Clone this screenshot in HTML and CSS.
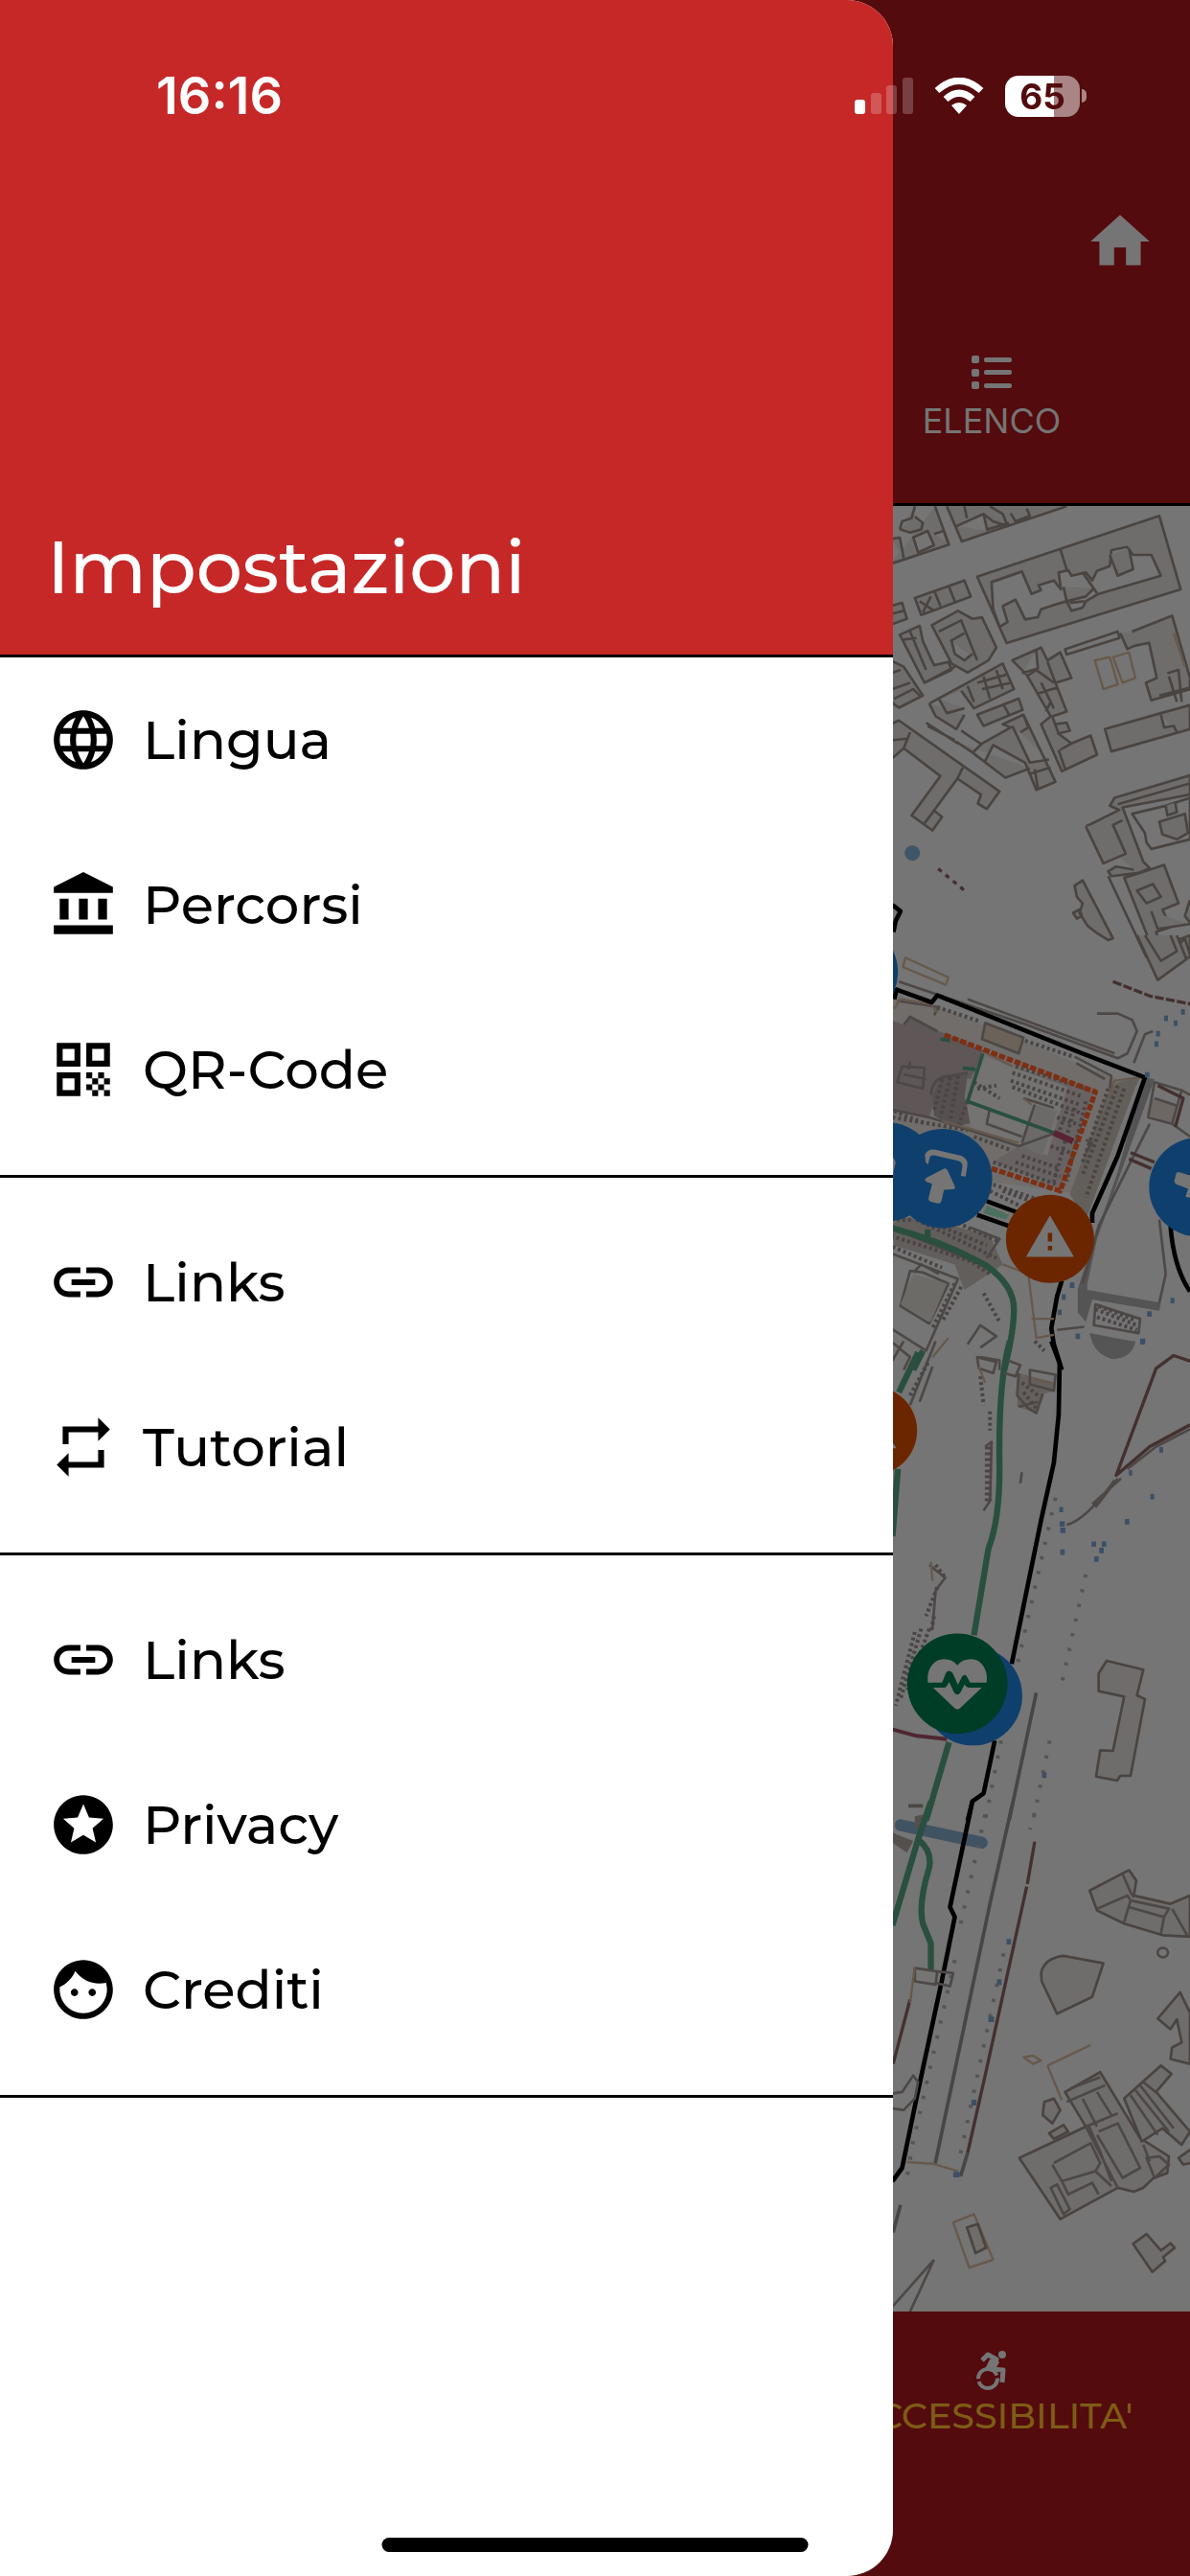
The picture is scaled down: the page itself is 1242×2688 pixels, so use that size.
FILE: index.html
```
<!DOCTYPE html>
<html lang="it">
  <head>
    <meta charset="UTF-8" />
    <meta name="viewport" content="width=device-width, initial-scale=1" />
    <title>Impostazioni</title>
    <link rel="stylesheet" href="styles.css">
  </head>
  <body>

    <!-- page under the drawer -->
    <div class="app">
      <header class="app-header">
        <a href="#home" class="home-link" aria-label="Home">
          <svg class="icon" viewBox="0 0 24 24"><path d="M10 20v-6h4v6h5v-8h3L12 3 2 12h3v8z"/></svg>
        </a>
        <nav class="tabs">
          <a href="#elenco" class="tab">
            <svg width="42" height="36" viewBox="0 0 42 36">
              <rect x="0" y="0" width="8" height="8" rx="2"/><rect x="13" y="2" width="29" height="5" rx="2"/>
              <rect x="0" y="14" width="8" height="8" rx="2"/><rect x="13" y="15" width="29" height="5" rx="2"/>
              <rect x="0" y="27" width="8" height="8" rx="2"/><rect x="13" y="29" width="29" height="5" rx="2"/>
            </svg>
            <span class="tab-label">ELENCO</span>
          </a>
        </nav>
      </header>

      <svg class="map" viewBox="0 529 1242 1883" preserveAspectRatio="xMaxYMin slice">
        <!-- north blocks -->
        <g class="building" transform="translate(900 500) scale(.33333)">
          <path d="M90 268L272 208L228 88M90 190L118 186L130 250M118 160L125 135L155 125L165 88M118 160L150 170L185 160L190 140L165 120M160 185L205 165L225 210L175 232zM225 175L255 165L268 200"/>
          <path d="M265 88L312 198L640 88M295 150L380 112L392 165M320 88L328 125M380 112L410 135L455 150L440 112L400 88M465 110L480 135L525 118L515 95M392 160L460 140"/>
          <path d="M360 308L930 118L997 348L452 516z"/>
          <path class="hole" d="M405 325L500 292L530 362L560 350L552 335L600 320L622 348L615 295L645 288L655 305L700 295L720 320L735 290L775 275L780 225L828 215L848 240L905 240L935 305L740 362L700 385L690 405L655 415L640 385L605 395L560 410L550 435L510 442L480 380L440 400L455 450L430 465L410 410z"/>
          <path d="M620 222L640 285M775 240L800 305L848 285L835 220M630 340L640 385L700 370L725 345M690 295L735 360M650 390L695 385"/>
          <path d="M165 375L320 320L340 370L185 428zM225 350L245 400M270 335L290 385M180 385L225 415M215 370L190 420M90 400L125 390L140 440L90 458M90 425L130 415"/>
          <path d="M118 490L180 462L190 510L225 585L270 575L280 600L195 640zM150 480L200 600M130 505L170 500M218 460L300 415L345 440L375 435L420 530L395 570L330 608L280 580zM240 480L310 445L360 570M275 510L320 485M280 510L290 550L320 570L345 550M195 640L290 590"/>
          <path d="M90 570L130 590L190 680L115 718L90 700M90 610L120 600M95 660L150 640M100 690L160 660L180 680"/>
          <path d="M210 705L440 580L475 660L350 720L310 665M240 690L265 735L320 720M330 650L350 700M380 620L400 690M420 600L440 660M360 640L450 615M375 660L465 640M210 705L230 745L295 785L320 740M200 765L300 830M205 775L290 820M360 740L490 690L502 725L380 775z"/>
          <path d="M345 860L375 830L465 780L440 770L505 740L605 950L545 975L510 890L410 835L385 885M295 825L345 858L448 937L525 908M310 790L370 830M440 705L460 740M470 775L525 890L585 880M505 740L520 780L495 795M525 925L590 905M540 910L550 970"/>
          <path d="M470 570L560 530L580 570L620 545L655 625L605 640L640 730L595 745L615 800L655 830L715 805L735 865L625 917L560 770L590 745L515 615zM500 610L550 595L545 540M515 620L545 600L600 640M580 575L605 640M545 675L610 655M590 700L575 730M560 640L600 720M620 850L655 830M600 770L640 765L650 790L610 800M615 850L635 910"/>
          <path class="hole" d="M635 535L800 480L805 500L640 552z"/>
          <path d="M845 480L970 430L1026 625L1026 660L905 695L888 640L922 625L898 515L850 525L830 535L808 485M955 610L990 600L1000 700M960 620L985 700M930 680L1026 655M760 785L935 735L1026 710V785L780 855zM935 740L945 780L975 775L985 795"/>
          <path class="sand" d="M728 570L775 560L800 645L755 660zM785 560L835 545L855 625L815 640zM975 485L1010 590"/>
          <path d="M90 770L115 758L430 980L390 1035L362 1018L372 990L298 940L225 1040L250 1060L220 1102L155 1055L245 932L130 845L90 880z"/>
          <path class="line" d="M150 795L130 845M298 940L315 905M90 820L140 815M225 1040L195 1080"/>
          <path d="M700 1090L805 1038L775 1025L790 1000L1026 930V990L815 1030L880 1200L900 1220L865 1235L780 1245L770 1230L795 1215L850 1225"/>
          <path class="hole" d="M845 1050L950 1025L1026 1000V1130L905 1160L890 1140L885 1110z"/>
          <path d="M700 1090L755 1205L825 1175L785 1085L815 1070M930 1075L1010 1050L1020 1110L985 1130L940 1115zM950 1025L955 1055L985 1045L980 1015"/>
          <path class="line" d="M800 1020L1026 955M770 1245L890 1500"/>
          <path d="M820 1250L855 1240L945 1210L990 1330L940 1350L965 1405L920 1420L935 1465L1026 1430V1500H920z"/>
          <path d="M860 1290L910 1270L935 1310L890 1330zM905 1355L925 1410L1026 1395M1026 1320L1010 1370L1026 1390M960 1490L1010 1440L1026 1490"/>
          <path d="M665 1275L690 1258L785 1440L770 1445L730 1420L705 1400L680 1360L690 1330L672 1310zM660 1360L680 1350L688 1370L672 1378z"/>
        </g>
        <g transform="translate(900 500) scale(.33333)">
          <circle cx="157" cy="1173" r="24" fill="#3f5666"/>
          <path class="wall" stroke-dasharray="14 16" d="M238 1222L330 1298"/>
          <path class="border" d="M95 1335L120 1355L105 1385L98 1420"/>
        </g>

        <!-- castle -->
        <g transform="translate(900 980) scale(.33333)">
          <g class="building">
            <path d="M860 -10L925 130L1015 65L985 -10"/>
            <path d="M885 -10L935 70L985 40L965 -10"/>
          </g>
          <path class="sand" d="M135 60L270 122L262 145L128 90z"/>
          <path class="road" d="M880 435L915 440L735 940L705 1080L700 1190L675 1170V1095L720 960L800 730z"/>
          <path class="road" d="M680 1095L935 1140L930 1165L720 1130L700 1200L675 1170zM712 1235L855 1262Q840 1315 780 1315Q725 1300 712 1235z"/>
          <path d="M100 180L215 205L500 320L770 430L800 440L690 800L400 760L90 580z" fill="#706d6b"/>
          <path d="M90 255L130 270L150 245L240 290L380 350L340 440L250 430L210 560L90 530z" fill="#5f5658"/>
          <path d="M250 435L330 425L320 500L370 570L290 590L225 555L220 490z" fill="#565150"/>
          <path d="M470 400L720 480L625 780L410 700L490 650L600 600L640 480z" fill="#686362"/>
          <path d="M385 370L640 465L580 680L340 590L325 510z" fill="#747372"/>
          <path d="M540 520L610 540L565 680L500 650z" fill="#6c6a68"/>
          <path d="M385 260L505 310L490 360L375 315z" fill="#6b6359"/>
          <path d="M800 450L870 435L855 465L700 880L650 800L760 500z" fill="#625e59"/>
          <path class="dots" d="M480 400L715 475M470 420L690 495M465 445L680 520M470 465L680 545M610 560L670 580M590 650L650 670M500 680L620 720M480 700L620 745M410 700L610 770M440 790L550 830M235 215L370 260M510 320L660 370M350 620L460 660M95 560L330 600M100 540L200 580"/>
          <path class="dots" d="M250 440L225 540M275 435L245 560M300 430L275 570M330 510L300 590M350 450L430 500M360 470L420 460M700 510L640 760M665 530L600 760M640 540L610 620M800 460L690 740M820 470L700 810M770 470L690 700"/>
          <path class="thin" d="M125 400L195 405L190 470L110 450zM130 425L200 440M150 385L145 410M215 490Q220 430 280 430L330 420M90 535L210 560L260 575L490 650L600 610M385 265L505 310L490 360L375 315zM505 500L600 530M540 520L500 640M400 530L390 580L500 620M665 370L780 430L775 470M110 195L240 215L225 240M130 270L150 245L235 290M670 390L760 440M700 630L720 640L700 670"/>
          <path class="sand" d="M100 220L120 190L215 205L235 230M390 360L470 400M870 435L790 445L770 500M250 570L490 640M505 500L530 520"/>
          <path class="thin" d="M115 135L500 265L800 375L830 360L860 290L845 255L800 235H735M330 190L790 360M850 390L885 300L910 290"/>
          <path class="orange-line" d="M258 302L730 480L620 790L405 720"/>
          <path class="green-thin" d="M245 315L275 320M378 360L330 510L600 608M315 405L355 410"/>
          <path class="purple-thin" d="M600 608L660 635"/>
          <path class="border" d="M100 190L108 160L218 200L235 178L690 360L885 435L800 680L720 860V890"/>
          <path class="border" d="M390 822L520 870M360 865L460 900"/>
          <path d="M390 835L460 865L450 880L380 860z" fill="#4b7060"/>
          <path class="border" d="M625 1070L610 1120L592 1220L600 1270L625 1350M965 900Q975 1030 1026 1105"/>
          <path d="M905 500L990 520L970 580L890 550z" fill="#6c6763"/>
          <path class="thin" d="M930 880L950 1050L930 1140M1000 475L970 580L895 560L915 450L1000 475L1026 490M915 500L990 525M970 580L1026 620M690 1080L740 900L900 580M610 1225L695 1215M730 1145L870 1190L865 1235L725 1210z"/>
          <path class="wall" d="M925 460L1005 500L980 590M840 670L915 700M835 690L905 720"/>
          <path class="dots" d="M730 1160L860 1210M735 1185L860 1225M740 1150L855 1195"/>
          <path class="wall" stroke-dasharray="28 7" d="M785 135L900 180L1026 205"/>
          <path class="water" d="M945 250h12M975 265h12M998 230h12M915 330h12M885 427h14M650 1085h14M625 1122h12M612 1170h12M668 1245h14M892 1175h14M965 1133h12M870 1262h14M920 298h12"/>
          <!-- streets south of the castle -->
          <path d="M120 870L250 890L400 930L440 1020L320 1100L290 1020L100 960L90 900z" fill="#625e5c"/>
          <path class="dots" d="M90 930L340 1010L400 1050M95 965L250 1030M170 880L420 1000M220 890L390 960M300 890L430 950M290 1080L220 1220M310 1090L250 1200M90 880L160 880M380 1110L430 1200M410 770L560 820M400 790L500 840"/>
          <path class="thin" d="M90 905L200 950L420 1040M150 1040L190 1045L270 1080L210 1205L120 1150zM90 985L300 1065L200 1290L90 1220M340 905L430 940L390 1000M160 1045L185 1020L240 1050M330 1270L370 1210L420 1245L370 1280M370 1310L430 1320V1350M90 1260L150 1310L130 1350"/>
          <path d="M160 1050L265 1080L215 1200L120 1145z" fill="#6c6b68"/>
          <path class="sand" d="M520 1050L545 1250L600 1240M440 1020L520 1050L590 1070M530 1190L600 1190M270 1250L220 1310"/>
          <path class="green-line" d="M90 905Q260 950 390 1025Q475 1085 475 1160Q475 1230 445 1350M205 910V950M190 1290L160 1350"/>
        </g>

        <!-- riverside -->
        <g transform="translate(900 1400) scale(.33333)">
          <path class="green-line" d="M462 0Q425 130 430 400Q430 560 395 650L350 920M175 35L115 160M112 400L95 610M272 1255L200 1500"/>
          <path d="M490 100L605 130L600 155L570 165L545 225L485 205z" fill="#65605d"/>
          <path class="thin" d="M360 50L420 65L410 100L365 85zM455 60L495 75L480 110L445 100M525 90L605 105L600 155L525 135zM490 100L485 170L520 210L545 225L565 165M490 205L550 190M95 60L130 0M150 200L230 0M180 190L220 80M385 330L405 315L400 500L380 530M500 410L495 445M145 1452H190M210 700L260 740L230 780L220 900"/>
          <path class="dots" d="M390 330V510M400 330V500M370 110L380 200M400 220V280M230 700L260 740M235 770L200 860M225 860L215 910M165 910L105 1140M185 900L120 1120M210 900L140 1090M150 170L210 60M500 130L550 170M505 160L545 210M540 0L570 30"/>
          <path class="sand" d="M365 80L385 130M215 690L220 750M540 120L590 130"/>
          <path class="border" d="M592 0L618 70L615 230L600 380L560 560L468 1010M415 1250L380 1415L345 1440L330 1500"/>
          <path class="wall" d="M1026 62L975 45L920 85L795 420L900 330L1026 262"/>
          <path class="thin" d="M790 435Q700 560 640 575M810 430L720 510M800 430L730 520M830 400L920 330L1026 275"/>
          <path class="lane" d="M545 1100L460 1500"/>
          <path class="river-gate" d="M95 1215L170 1235L265 1245"/>
          <path class="posts" d="M605 490L485 1015M435 1250L385 1500M700 730L625 1070M587 1250L535 1500"/>
          <path class="water" d="M617 527h12M618 572h16M620 592h16M620 660h14M718 635h14M750 635h14M742 655h14M726 682h14M822 565h14M902 486h12M563 1358h14M835 412h10M930 340h12M872 0h14"/>
          <path class="block" d="M765 1000L880 1028L860 1108L885 1120L840 1360H808L798 1375L732 1362L745 1280L785 1282L820 1112L740 1095V1040z"/>
          <path d="M718 0H855Q845 55 780 55Q735 40 718 0z" fill="#555"/>
        </g>

        <!-- south end -->
        <g transform="translate(900 1880) scale(.33333 .34439)">
          <path d="M120 72L375 125" stroke="#3f5363" stroke-width="36" stroke-linecap="round"/>
          <path d="M95 95L160 120L140 155L95 125zM165 45L190 40L195 80H165z" fill="#554f4d"/>
          <path class="green-line" d="M215 0L175 115L95 375M175 115Q220 150 210 200Q175 310 190 370L215 430V510"/>
          <path class="border" d="M345 0L275 320L290 350L250 540L170 900L125 1110L95 1150"/>
          <path class="lane" d="M472 0L400 310L228 1100"/>
          <path class="wall" d="M540 122L517 250M515 258L385 830L330 1065M150 600L97 795"/>
          <path class="lane" d="M330 1065L308 1135M120 1222L97 1305"/>
          <path class="posts" d="M385 40L305 385M290 480L160 1030L140 1140M540 35L525 85M443 460L305 1080"/>
          <path class="thin" d="M165 505L235 515L230 555L165 545zM235 515L285 520L275 560L230 550M145 15H190M95 885L125 880L160 830L175 850L165 900L130 935L95 930M225 1388L95 1530M225 1388L150 1545"/>
          <path class="sand" d="M165 500L150 610M140 1092L225 1098L300 1120M580 800L715 738M580 800L625 905M505 775L535 770L560 785L535 795zM285 1275L350 1250L410 1388L335 1412z"/>
          <path class="water" d="M452 425h14M422 547h14M395 660h18M342 912h16M285 1130h20"/>
          <path class="block" d="M712 270L835 208L858 240L850 285L965 310L1026 285V410L940 405L820 370L735 330z"/>
          <path class="thin" d="M735 325L830 285L840 300L820 365M815 220L840 275L850 290M840 300L960 325L945 350L835 320M945 350L935 400M970 325L1020 410M925 458a16 14 0 1 0 32 0a16 14 0 1 0 -32 0"/>
          <path class="block" d="M560 520Q570 475 630 468L755 490L720 592L610 643L562 545zM995 578L925 658L965 690L985 660L1000 730L970 745L965 780L1026 795V640zM328 1290L362 1280L388 1352L355 1368z"/>
          <path class="block" d="M492 1080L700 985L635 880L745 820L870 1020L960 1075L955 1125L910 1142L880 1170L850 1182L800 1170L620 1265z"/>
          <path class="thin" d="M700 985L800 945M700 985L800 1170M640 910L760 860M690 900L735 985M735 880L780 950M600 1095L715 1035L745 1095L730 1120L625 1150L595 1100M625 1150L645 1190L720 1155L740 1190M740 1000L800 975L870 1110L815 1140L735 1010M590 1170L610 1160L650 1235L630 1250zM730 1120L780 1165M650 870L745 835M710 985L745 1060L780 1150M890 1080L930 1075L960 1100L915 1140zM880 1040L900 1090"/>
          <path class="block" d="M820 900L935 800L968 825L920 880L1026 1000L1000 1040L940 990L875 1030zM570 910L600 900L620 935L595 975L565 950zM585 1005L630 980L645 1000L600 1022zM848 1340L890 1310L935 1360L965 1338L978 1352L942 1380L948 1392L908 1425zM1026 1055L990 1080L1005 1100L1026 1095"/>
          <path class="thin" d="M855 875L960 1000M870 860L975 990M840 890L925 1010M880 850L925 885"/>
        </g>

        <!-- pins -->
        <g transform="translate(900 980) scale(.33333)">
          <circle class="pin-blue" cx="-43" cy="105" r="155"/>
          <circle class="pin-blue" cx="76" cy="730" r="155"/>
          <path class="glyph" d="M80 670L100 690L120 735Q125 755 105 754L80 760z"/>
          <circle class="pin-blue" cx="252" cy="751" r="155"/>
          <path class="glyph" d="M196 678Q205 656 230 661L310 680Q334 690 329 712L324 745L309 743L314 712Q313 700 300 696L228 679Q214 675 211 688L206 708L199 700z"/>
          <path class="glyph" d="M252 723Q261 715 267 725L290 775Q293 785 283 785L256 786L248 822Q244 831 234 828L216 824Q206 821 208 812L219 768L202 762Q192 757 201 749z"/>
          <circle class="pin-blue" cx="1053" cy="778" r="155"/>
          <path class="glyph" d="M990 731L1040 745V815L1012 808L1020 783L985 770Q975 766 978 755L982 738Q984 730 990 731z"/>
          <circle class="pin-orange" cx="588" cy="940" r="138"/>
          <path class="glyph" transform="translate(506 853) scale(6.82)" d="M1 21h22L12 2 1 21zm12-3h-2v-2h2v2zm0-4h-2v-4h2v4z"/>
          <circle class="pin-orange" cx="34" cy="1540" r="138"/>
          <path class="glyph" d="M80 1555L108 1595H80z"/>
        </g>
        <g transform="translate(900 1400) scale(.33333)">
          <circle class="pin-blue" cx="346" cy="1110" r="155"/>
          <circle class="pin-green" cx="298" cy="1072" r="157"/>
          <path class="glyph" d="M206 1068C200 1030 222 995 256 995Q282 995 298 1014Q314 995 340 995C374 995 396 1030 389 1068H338L327 1048Q320 1040 313 1049L300 1075L283 1038Q272 1025 262 1038L250 1068z"/>
          <path class="glyph" d="M222 1084H258Q265 1082 272 1066L288 1100Q298 1112 308 1099L320 1074Q326 1083 332 1084H374L308 1147Q298 1156 288 1147z"/>
        </g>
      </svg>

      <nav class="bottom-nav tabs">
        <a href="#accessibilita" class="tab">
          <svg width="32" height="41" viewBox="0 0 32 41">
            <circle cx="27" cy="4" r="4"/>
            <path d="M6 10L12 4L21 9L14 19L28 20L27 33" fill="none" stroke="currentColor" stroke-width="5" stroke-linejoin="round"/>
            <path d="M14 9L21 8L24 12L20 19L9 19z"/>
            <circle cx="12" cy="29" r="10" fill="none" stroke="currentColor" stroke-width="4" stroke-dasharray="28 3"/>
          </svg>
          <span class="tab-label active">ACCESSIBILITA'</span>
        </a>
      </nav>
    </div>

    <!-- side drawer -->
    <aside class="drawer">
      <div class="drawer-header">
        <h1 class="drawer-title">Impostazioni</h1>
      </div>
      <ul class="menu">
        <li><a href="#lingua" class="menu-item">
          <svg class="icon" viewBox="0 0 24 24"><path d="M11.99 2C6.47 2 2 6.48 2 12s4.47 10 9.99 10C17.52 22 22 17.52 22 12S17.52 2 11.99 2zm6.93 6h-2.95c-.32-1.25-.78-2.45-1.38-3.56 1.84.63 3.37 1.91 4.33 3.56zM12 4.04c.83 1.2 1.48 2.53 1.91 3.96h-3.82c.43-1.43 1.08-2.76 1.91-3.96zM4.26 14C4.1 13.36 4 12.69 4 12s.1-1.36.26-2h3.38c-.08.66-.14 1.32-.14 2 0 .68.06 1.34.14 2H4.26zm.82 2h2.95c.32 1.25.78 2.45 1.38 3.56-1.84-.63-3.37-1.9-4.33-3.56zm2.95-8H5.08c.96-1.66 2.49-2.93 4.33-3.56C8.81 5.55 8.35 6.75 8.03 8zM12 19.96c-.83-1.2-1.48-2.53-1.91-3.96h3.82c-.43 1.43-1.08 2.76-1.91 3.96zM14.34 14H9.66c-.09-.66-.16-1.32-.16-2 0-.68.07-1.35.16-2h4.68c.09.65.16 1.32.16 2 0 .68-.07 1.34-.16 2zm.25 5.56c.6-1.11 1.06-2.31 1.38-3.56h2.95c-.96 1.65-2.49 2.93-4.33 3.56zM16.36 14c.08-.66.14-1.32.14-2 0-.68-.06-1.34-.14-2h3.38c.16.64.26 1.31.26 2s-.1 1.36-.26 2h-3.38z"/></svg>
          <span>Lingua</span></a></li>
        <li><a href="#percorsi" class="menu-item">
          <svg class="icon" viewBox="0 0 24 24"><path d="M4 10v7h3v-7H4zm6.5 0v7h3v-7h-3zM2 22h20v-3H2v3zm15-12v7h3v-7h-3zm-5-9L2 6v2h20V6L12 1z"/></svg>
          <span>Percorsi</span></a></li>
        <li><a href="#qrcode" class="menu-item">
          <svg class="icon" viewBox="0 0 24 24"><path d="M3 11h8V3H3v8zm2-6h4v4H5V5zM3 21h8v-8H3v8zm2-6h4v4H5v-4zM13 3v8h8V3h-8zm6 6h-4V5h4v4zM19 19h2v2h-2zM13 13h2v2h-2zM15 15h2v2h-2zM13 17h2v2h-2zM15 19h2v2h-2zM17 17h2v2h-2zM17 13h2v2h-2zM19 15h2v2h-2z"/></svg>
          <span>QR-Code</span></a></li>
      </ul>
      <ul class="menu">
        <li><a href="#links" class="menu-item">
          <svg class="icon" viewBox="0 0 24 24"><path d="M3.9 12c0-1.71 1.39-3.1 3.1-3.1h4V7H7c-2.76 0-5 2.24-5 5s2.24 5 5 5h4v-1.9H7c-1.71 0-3.1-1.39-3.1-3.1zM8 13h8v-2H8v2zm9-6h-4v1.9h4c1.71 0 3.1 1.39 3.1 3.1s-1.39 3.1-3.1 3.1h-4V17h4c2.76 0 5-2.24 5-5s-2.24-5-5-5z"/></svg>
          <span>Links</span></a></li>
        <li><a href="#tutorial" class="menu-item">
          <svg class="icon" viewBox="0 0 24 24"><path d="M7 7h10v3l4-4-4-4v3H5v6h2V7zm10 10H7v-3l-4 4 4 4v-3h12v-6h-2v4z"/></svg>
          <span>Tutorial</span></a></li>
      </ul>
      <ul class="menu">
        <li><a href="#links" class="menu-item">
          <svg class="icon" viewBox="0 0 24 24"><path d="M3.9 12c0-1.71 1.39-3.1 3.1-3.1h4V7H7c-2.76 0-5 2.24-5 5s2.24 5 5 5h4v-1.9H7c-1.71 0-3.1-1.39-3.1-3.1zM8 13h8v-2H8v2zm9-6h-4v1.9h4c1.71 0 3.1 1.39 3.1 3.1s-1.39 3.1-3.1 3.1h-4V17h4c2.76 0 5-2.24 5-5s-2.24-5-5-5z"/></svg>
          <span>Links</span></a></li>
        <li><a href="#privacy" class="menu-item">
          <svg class="icon" viewBox="0 0 24 24"><path d="M11.99 2C6.47 2 2 6.48 2 12s4.47 10 9.99 10C17.52 22 22 17.52 22 12S17.52 2 11.99 2zm4.24 16L12 15.45 7.77 18l1.12-4.81-3.73-3.23 4.92-.42L12 5l1.92 4.53 4.92.42-3.73 3.23L16.23 18z"/></svg>
          <span>Privacy</span></a></li>
        <li><a href="#crediti" class="menu-item">
          <svg class="icon" viewBox="0 0 24 24"><path d="M9 11.75c-.69 0-1.25.56-1.25 1.25s.56 1.25 1.25 1.25 1.25-.56 1.25-1.25-.56-1.25-1.25-1.25zm6 0c-.69 0-1.25.56-1.25 1.25s.56 1.25 1.25 1.25 1.25-.56 1.25-1.25-.56-1.25-1.25-1.25zM12 2C6.48 2 2 6.48 2 12s4.48 10 10 10 10-4.48 10-10S17.52 2 12 2zm0 18c-4.41 0-8-3.59-8-8 0-.29.02-.58.05-.86 2.36-1.05 4.23-2.98 5.21-5.37C11.07 8.33 14.05 10 17.42 10c.78 0 1.53-.09 2.25-.26.21.71.33 1.47.33 2.26 0 4.41-3.59 8-8 8z"/></svg>
          <span>Crediti</span></a></li>
      </ul>
    </aside>

    <!-- phone status bar, floats over everything -->
    <div class="status-bar">
      <span class="clock">16:16</span>
      <div class="status-icons">
        <svg width="61" height="38" viewBox="0 0 61 38" fill="#fff">
          <rect x="0" y="23" width="11" height="15" rx="3"/>
          <g opacity=".22">
            <rect x="17" y="16" width="11" height="22" rx="3"/>
            <rect x="33" y="8" width="11" height="30" rx="3"/>
            <rect x="50" y="0" width="11" height="38" rx="3"/>
          </g>
        </svg>
        <svg width="52" height="38" viewBox="0 0 52 38" fill="none" stroke="#fff">
          <path d="M3 13.500Q26 -7 49 13.500" stroke-width="7"/>
          <path d="M12 22.500Q26 10 40 22.500" stroke-width="7"/>
          <path d="M18 29Q26 23 34 29L26 38z" fill="#fff" stroke="none"/>
        </svg>
        <div class="battery">
          <span class="battery-level">65</span>
          <span class="battery-tip"></span>
        </div>
      </div>
    </div>
    <div class="home-indicator"></div>

  </body>
</html>
```
FILE: styles.css
```
html, body {
  margin: 0;
  padding: 0;
  height: 100%;
}
body {
  font-family: Montserrat, "DejaVu Sans", sans-serif;
  background-color: #757575;
  overflow: hidden;
}
a {
  color: inherit;
  text-decoration: none;
}
svg {
  display: block;
  flex: none;
}
.icon {
  width: 74px;
  height: 74px;
  fill: currentColor;
}

/* page under the drawer */
.app {
  display: flex;
  flex-direction: column;
  height: 100%;
  color: #757575;
}
.app-header {
  display: flex;
  flex-direction: column;
  gap: 82px;
  padding: 215px 0 64px;
  background-color: #530b0d;
  border-bottom: 3px solid black;
}
.home-link {
  align-self: flex-end;
  margin-right: 36px;
}
.tabs {
  display: grid;
  grid-template-columns: repeat(3, 1fr);
}
.tab {
  grid-column: 3;
  display: flex;
  flex-direction: column;
  align-items: center;
  gap: 10px;
  fill: currentColor;
}
.tab-label {
  font-family: Inter, sans-serif;
  font-size: 36px;
  line-height: 44px;
}
.tab-label.active {
  font-family: Montserrat, "DejaVu Sans", sans-serif;
  font-size: 38px;
  font-weight: 500;
  color: #7e5c16;
}
.bottom-nav {
  padding: 41px 0 145px;
  background-color: #530b0d;
}
.bottom-nav .tab { gap: 5px; }

/* map */
.map {
  flex: 1;
  width: 100%;
  height: 0;
  min-height: 0;
  fill: none;
  stroke-linejoin: round;
}
.building path, .block {
  fill: #6f6d6b;
  stroke: #4a4441;
  stroke-width: 8;
}
.building .hole { fill: #757575; }
.building .line { fill: none; }
.building .sand, .sand {
  fill: none;
  stroke: #67594b;
  stroke-width: 7;
}
.thin {
  stroke: #4d4846;
  stroke-width: 8;
}
.dots {
  stroke: #4a4444;
  stroke-width: 12;
  stroke-dasharray: 9 9;
}
.road { fill: #545454; }
.border {
  stroke: black;
  stroke-width: 14;
}
.wall {
  stroke: #43302f;
  stroke-width: 10;
}
.river-gate {
  stroke: #4f2631;
  stroke-width: 12;
}
.lane {
  stroke: #484545;
  stroke-width: 11;
}
.orange-line {
  stroke: #7d2f13;
  stroke-width: 16;
  stroke-dasharray: 20 6;
}
.green-line {
  stroke: #294f3f;
  stroke-width: 19;
}
.green-thin {
  stroke: #294f3f;
  stroke-width: 11;
}
.purple-thin {
  stroke: #5a2433;
  stroke-width: 20;
}
.posts {
  stroke: #555;
  stroke-width: 12;
  stroke-dasharray: 10 37;
}
.water {
  stroke: #3b5065;
  stroke-width: 17;
}
.pin-blue { fill: #0f3f6d; }
.pin-orange { fill: #6b2600; }
.pin-green { fill: #003d26; }
.glyph { fill: #757575; }

/* drawer */
.drawer {
  position: fixed;
  top: 0;
  left: 0;
  width: 75%;
  height: 100%;
  overflow: hidden;
  background-color: white;
  border-radius: 0 48px 48px 0;
}
.drawer-header {
  display: flex;
  align-items: flex-end;
  box-sizing: border-box;
  height: 686px;
  padding: 0 49px 47px;
  background-color: #c62828;
  border-bottom: 3px solid black;
}
.drawer-title {
  margin: 0;
  color: white;
  font-size: 76px;
  font-weight: 500;
  line-height: 88px;
}
.menu {
  list-style: none;
  margin: 0;
  padding: 23px 0 24px;
  border-bottom: 3px solid black;
}
.drawer-header + .menu { padding-top: 0; }
.menu-item {
  display: flex;
  align-items: center;
  gap: 25px;
  height: 172px;
  padding: 0 50px;
  color: black;
  font-size: 56px;
  font-weight: 500;
}

/* status bar */
.status-bar {
  position: fixed;
  top: 78px;
  left: 0;
  right: 0;
  display: flex;
  justify-content: space-between;
  align-items: center;
  padding: 0 108px 0 163px;
  color: white;
  font-family: Inter, sans-serif;
}
.clock {
  font-size: 54px;
  font-weight: 600;
  line-height: 44px;
}
.status-icons {
  display: flex;
  align-items: center;
  gap: 22px;
}
.battery {
  display: flex;
  align-items: center;
  gap: 2px;
}
.battery-level {
  width: 78px;
  border-radius: 14px;
  background: linear-gradient(to right, white 65%, #a98586 65%);
  color: #530b0d;
  font-size: 37px;
  font-weight: 700;
  line-height: 43px;
  text-align: center;
}
.battery-tip {
  width: 5px;
  height: 14px;
  border-radius: 0 5px 5px 0;
  background-color: #a98586;
}
.home-indicator {
  position: fixed;
  bottom: 25px;
  left: 50%;
  width: 445px;
  height: 15px;
  border-radius: 8px;
  background-color: black;
  transform: translateX(-50%);
}
```
